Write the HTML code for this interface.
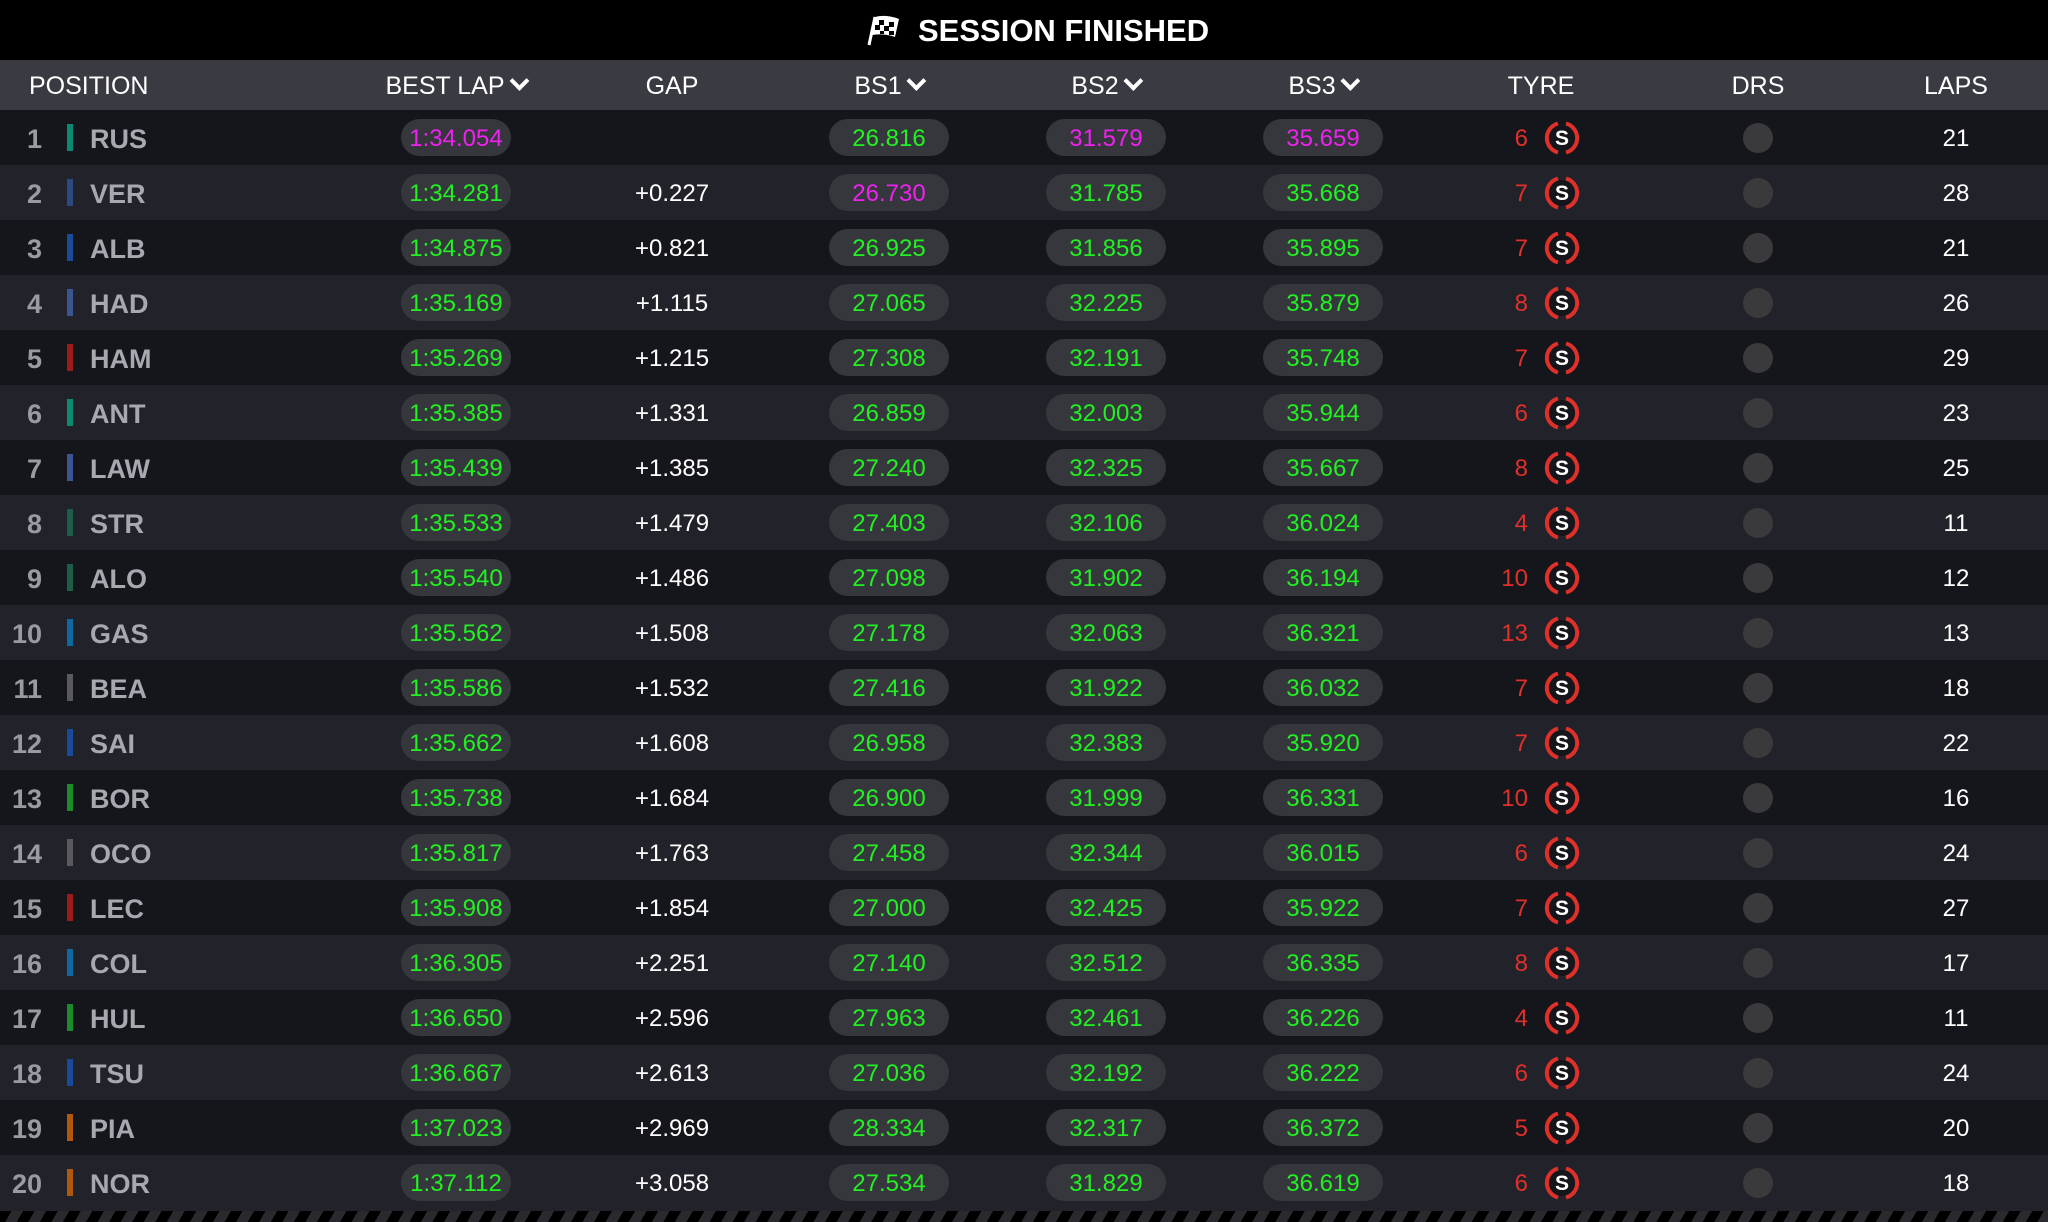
<!DOCTYPE html>
<html><head><meta charset="utf-8"><style>
*{margin:0;padding:0;box-sizing:border-box}
body{width:2048px;height:1222px;background:#000;position:relative;overflow:hidden;font-family:"Liberation Sans",sans-serif;color:#fff}
.top{position:absolute;left:0;top:0;width:2048px;height:60px;background:#000}
.title{position:absolute;left:918px;top:13px;font-size:31px;font-weight:bold;letter-spacing:0px;line-height:36px}
.hdr{position:absolute;left:0;top:60px;width:2048px;height:50px;background:#393a42;font-size:25px;line-height:52px}
.hdr span{position:absolute;top:0;white-space:nowrap}
.c{transform:translateX(-50%)}
.chev{display:inline-block;width:14px;height:14px;border-right:4px solid #fff;border-bottom:4px solid #fff;transform:rotate(45deg);margin-left:8px;position:relative;top:-6px}
.r{position:absolute;left:0;width:2048px;height:55px;font-size:24px;line-height:58px}
.o{background:#15151c}.e{background:#22222a}
.r>*{position:absolute}
.pos{right:2006px;top:0;color:#9a9aa2;font-weight:bold;font-size:27px;text-align:right}
.bar{left:67px;top:14px;width:6px;height:27px}
.code{left:90px;top:0;color:#a8a8b0;font-weight:bold;font-size:27px}
.pill{top:9px;height:37px;line-height:40px;border-radius:19px;background:#36373d;text-align:center;color:#22f022}
.bl{left:401px;width:110px}
.b1{left:829px;width:120px}.b2{left:1046px;width:120px}.b3{left:1263px;width:120px}
.pu{color:#ee22ee}
.gap{left:672px;top:0;transform:translateX(-50%)}
.tn{right:520px;top:0;color:#e0302a;text-align:right}
.ty{left:1544px;top:10px;width:36px;height:36px}
.drs{left:1743px;top:13px;width:30px;height:30px;border-radius:50%;background:#3a3a3c}
.laps{left:1956px;top:0;transform:translateX(-50%)}
.stripe{position:absolute;left:0;top:1211px;width:2048px;height:11px;background:repeating-linear-gradient(120deg,#000 0 10px,#2a2a2e 10px 20px)}
</style></head><body>
<div class="top">
<svg style="position:absolute;left:866px;top:14px" width="36" height="32" viewBox="0 0 36 32"><path d="M3 31 L9 3" stroke="#fff" stroke-width="3"/><path d="M9 3 Q20 0 33 5 L29 23 Q18 19 6 21 Z" fill="#fff"/><g fill="#000"><rect x="13" y="6" width="5" height="5"/><rect x="23" y="8" width="5" height="5"/><rect x="9" y="11" width="5" height="5"/><rect x="18" y="12" width="5" height="5"/><rect x="14" y="17" width="4" height="3"/><rect x="23" y="17" width="5" height="4"/></g></svg>
<div class="title">SESSION FINISHED</div>
</div>
<div class="hdr">
<span style="left:29px">POSITION</span>
<span class="c" style="left:456px">BEST LAP<i class="chev"></i></span>
<span class="c" style="left:672px">GAP</span>
<span class="c" style="left:889px">BS1<i class="chev"></i></span>
<span class="c" style="left:1106px">BS2<i class="chev"></i></span>
<span class="c" style="left:1323px">BS3<i class="chev"></i></span>
<span class="c" style="left:1541px">TYRE</span>
<span class="c" style="left:1758px">DRS</span>
<span class="c" style="left:1956px">LAPS</span>
</div>
<svg width="0" height="0" style="position:absolute"><defs><symbol id="t" viewBox="0 0 36 36"><circle cx="18" cy="18" r="13" fill="#15151c"/><path d="M14 3.5 A15 15 0 0 0 14 32.5" fill="none" stroke="#e0302a" stroke-width="4"/><path d="M22 3.5 A15 15 0 0 1 22 32.5" fill="none" stroke="#e0302a" stroke-width="4"/><text x="18" y="25" text-anchor="middle" font-family="Liberation Sans" font-weight="bold" font-size="21" fill="#fff">S</text></symbol></defs></svg>

<div class="r o" style="top:110px"><span class="pos">1</span><i class="bar" style="background:#0a8a70"></i><span class="code">RUS</span><span class="pill bl pu">1:34.054</span><span class="gap"></span><span class="pill b1">26.816</span><span class="pill b2 pu">31.579</span><span class="pill b3 pu">35.659</span><span class="tn">6</span><svg class="ty"><use href="#t"/></svg><i class="drs"></i><span class="laps">21</span></div>
<div class="r e" style="top:165px"><span class="pos">2</span><i class="bar" style="background:#2d4a80"></i><span class="code">VER</span><span class="pill bl">1:34.281</span><span class="gap">+0.227</span><span class="pill b1 pu">26.730</span><span class="pill b2">31.785</span><span class="pill b3">35.668</span><span class="tn">7</span><svg class="ty"><use href="#t"/></svg><i class="drs"></i><span class="laps">28</span></div>
<div class="r o" style="top:220px"><span class="pos">3</span><i class="bar" style="background:#1a4a9a"></i><span class="code">ALB</span><span class="pill bl">1:34.875</span><span class="gap">+0.821</span><span class="pill b1">26.925</span><span class="pill b2">31.856</span><span class="pill b3">35.895</span><span class="tn">7</span><svg class="ty"><use href="#t"/></svg><i class="drs"></i><span class="laps">21</span></div>
<div class="r e" style="top:275px"><span class="pos">4</span><i class="bar" style="background:#3a5590"></i><span class="code">HAD</span><span class="pill bl">1:35.169</span><span class="gap">+1.115</span><span class="pill b1">27.065</span><span class="pill b2">32.225</span><span class="pill b3">35.879</span><span class="tn">8</span><svg class="ty"><use href="#t"/></svg><i class="drs"></i><span class="laps">26</span></div>
<div class="r o" style="top:330px"><span class="pos">5</span><i class="bar" style="background:#9b1b1b"></i><span class="code">HAM</span><span class="pill bl">1:35.269</span><span class="gap">+1.215</span><span class="pill b1">27.308</span><span class="pill b2">32.191</span><span class="pill b3">35.748</span><span class="tn">7</span><svg class="ty"><use href="#t"/></svg><i class="drs"></i><span class="laps">29</span></div>
<div class="r e" style="top:385px"><span class="pos">6</span><i class="bar" style="background:#0a8a70"></i><span class="code">ANT</span><span class="pill bl">1:35.385</span><span class="gap">+1.331</span><span class="pill b1">26.859</span><span class="pill b2">32.003</span><span class="pill b3">35.944</span><span class="tn">6</span><svg class="ty"><use href="#t"/></svg><i class="drs"></i><span class="laps">23</span></div>
<div class="r o" style="top:440px"><span class="pos">7</span><i class="bar" style="background:#3a5590"></i><span class="code">LAW</span><span class="pill bl">1:35.439</span><span class="gap">+1.385</span><span class="pill b1">27.240</span><span class="pill b2">32.325</span><span class="pill b3">35.667</span><span class="tn">8</span><svg class="ty"><use href="#t"/></svg><i class="drs"></i><span class="laps">25</span></div>
<div class="r e" style="top:495px"><span class="pos">8</span><i class="bar" style="background:#1e5e48"></i><span class="code">STR</span><span class="pill bl">1:35.533</span><span class="gap">+1.479</span><span class="pill b1">27.403</span><span class="pill b2">32.106</span><span class="pill b3">36.024</span><span class="tn">4</span><svg class="ty"><use href="#t"/></svg><i class="drs"></i><span class="laps">11</span></div>
<div class="r o" style="top:550px"><span class="pos">9</span><i class="bar" style="background:#1e5e48"></i><span class="code">ALO</span><span class="pill bl">1:35.540</span><span class="gap">+1.486</span><span class="pill b1">27.098</span><span class="pill b2">31.902</span><span class="pill b3">36.194</span><span class="tn">10</span><svg class="ty"><use href="#t"/></svg><i class="drs"></i><span class="laps">12</span></div>
<div class="r e" style="top:605px"><span class="pos">10</span><i class="bar" style="background:#1068a0"></i><span class="code">GAS</span><span class="pill bl">1:35.562</span><span class="gap">+1.508</span><span class="pill b1">27.178</span><span class="pill b2">32.063</span><span class="pill b3">36.321</span><span class="tn">13</span><svg class="ty"><use href="#t"/></svg><i class="drs"></i><span class="laps">13</span></div>
<div class="r o" style="top:660px"><span class="pos">11</span><i class="bar" style="background:#5a5a5e"></i><span class="code">BEA</span><span class="pill bl">1:35.586</span><span class="gap">+1.532</span><span class="pill b1">27.416</span><span class="pill b2">31.922</span><span class="pill b3">36.032</span><span class="tn">7</span><svg class="ty"><use href="#t"/></svg><i class="drs"></i><span class="laps">18</span></div>
<div class="r e" style="top:715px"><span class="pos">12</span><i class="bar" style="background:#1a4a9a"></i><span class="code">SAI</span><span class="pill bl">1:35.662</span><span class="gap">+1.608</span><span class="pill b1">26.958</span><span class="pill b2">32.383</span><span class="pill b3">35.920</span><span class="tn">7</span><svg class="ty"><use href="#t"/></svg><i class="drs"></i><span class="laps">22</span></div>
<div class="r o" style="top:770px"><span class="pos">13</span><i class="bar" style="background:#1b8c2b"></i><span class="code">BOR</span><span class="pill bl">1:35.738</span><span class="gap">+1.684</span><span class="pill b1">26.900</span><span class="pill b2">31.999</span><span class="pill b3">36.331</span><span class="tn">10</span><svg class="ty"><use href="#t"/></svg><i class="drs"></i><span class="laps">16</span></div>
<div class="r e" style="top:825px"><span class="pos">14</span><i class="bar" style="background:#5a5a5e"></i><span class="code">OCO</span><span class="pill bl">1:35.817</span><span class="gap">+1.763</span><span class="pill b1">27.458</span><span class="pill b2">32.344</span><span class="pill b3">36.015</span><span class="tn">6</span><svg class="ty"><use href="#t"/></svg><i class="drs"></i><span class="laps">24</span></div>
<div class="r o" style="top:880px"><span class="pos">15</span><i class="bar" style="background:#9b1b1b"></i><span class="code">LEC</span><span class="pill bl">1:35.908</span><span class="gap">+1.854</span><span class="pill b1">27.000</span><span class="pill b2">32.425</span><span class="pill b3">35.922</span><span class="tn">7</span><svg class="ty"><use href="#t"/></svg><i class="drs"></i><span class="laps">27</span></div>
<div class="r e" style="top:935px"><span class="pos">16</span><i class="bar" style="background:#1068a0"></i><span class="code">COL</span><span class="pill bl">1:36.305</span><span class="gap">+2.251</span><span class="pill b1">27.140</span><span class="pill b2">32.512</span><span class="pill b3">36.335</span><span class="tn">8</span><svg class="ty"><use href="#t"/></svg><i class="drs"></i><span class="laps">17</span></div>
<div class="r o" style="top:990px"><span class="pos">17</span><i class="bar" style="background:#1b8c2b"></i><span class="code">HUL</span><span class="pill bl">1:36.650</span><span class="gap">+2.596</span><span class="pill b1">27.963</span><span class="pill b2">32.461</span><span class="pill b3">36.226</span><span class="tn">4</span><svg class="ty"><use href="#t"/></svg><i class="drs"></i><span class="laps">11</span></div>
<div class="r e" style="top:1045px"><span class="pos">18</span><i class="bar" style="background:#1a4a9a"></i><span class="code">TSU</span><span class="pill bl">1:36.667</span><span class="gap">+2.613</span><span class="pill b1">27.036</span><span class="pill b2">32.192</span><span class="pill b3">36.222</span><span class="tn">6</span><svg class="ty"><use href="#t"/></svg><i class="drs"></i><span class="laps">24</span></div>
<div class="r o" style="top:1100px"><span class="pos">19</span><i class="bar" style="background:#b0580e"></i><span class="code">PIA</span><span class="pill bl">1:37.023</span><span class="gap">+2.969</span><span class="pill b1">28.334</span><span class="pill b2">32.317</span><span class="pill b3">36.372</span><span class="tn">5</span><svg class="ty"><use href="#t"/></svg><i class="drs"></i><span class="laps">20</span></div>
<div class="r e" style="top:1155px;height:56px"><span class="pos">20</span><i class="bar" style="background:#b0580e"></i><span class="code">NOR</span><span class="pill bl">1:37.112</span><span class="gap">+3.058</span><span class="pill b1">27.534</span><span class="pill b2">31.829</span><span class="pill b3">36.619</span><span class="tn">6</span><svg class="ty"><use href="#t"/></svg><i class="drs"></i><span class="laps">18</span></div>
<div class="stripe"></div>
</body></html>
